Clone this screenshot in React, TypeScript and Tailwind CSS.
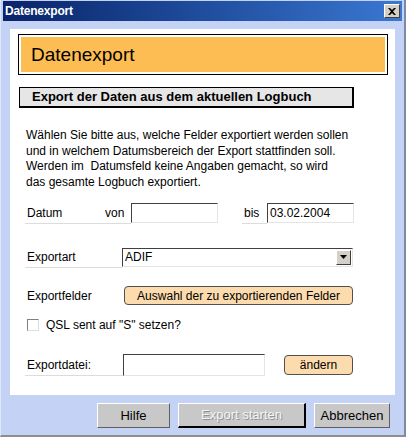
import React from "react"

const sunken =
  "bg-white border-t border-l border-t-[#404040] border-l-[#404040] border-r border-b border-r-[#e4e4e4] border-b-[#e4e4e4]"

const Label = (props: { text: string; w: string; cls?: string }) => (
  <div
    className={`${props.w} h-[22px] flex items-center pl-[2px] border-b border-[#dcdcdc] ${props.cls ?? ""}`}
  >
    {props.text}
  </div>
)

const WinButton = (props: {
  text: string
  w: string
  disabled?: boolean
  isDefault?: boolean
}) => (
  <div
    className={`${props.w} h-[25px] flex items-center justify-center bg-[#c8c8c8] text-[13px] border-t border-l border-white ${
      props.isDefault
        ? "border-r-2 border-b-2 border-r-black border-b-black"
        : "border-r border-b border-r-[#606060] border-b-[#606060]"
    } ${props.disabled ? "text-[#f4f4f4] [text-shadow:1px_1px_0_#909090]" : "text-black"}`}
  >
    {props.text}
  </div>
)

export default function App() {
  return (
    <div
      className="w-[406px] h-[437px] bg-[#c4d3f5] flex flex-col border-r-2 border-b-2 border-r-[#7c8aa8] border-b-[#8e8e8e] border-l border-l-[#dfe6f7]"
      style={{ fontFamily: '"Liberation Sans", Arial, sans-serif' }}
    >
      <div className="h-[20px] mx-[2px] mt-[1px] flex items-center justify-between bg-gradient-to-r from-[#0a246a] to-[#3a78d2] pl-[2px] pr-[2px]">
        <span className="text-white font-bold text-[12px] tracking-[-0.2px]">Datenexport</span>
        <div className="w-[16px] h-[14px] bg-[#d4d0c8] border-t border-l border-white border-r border-b border-r-[#404040] border-b-[#404040] flex items-center justify-center">
          <svg width="8" height="7" viewBox="0 0 8 7">
            <path d="M0 0 L2 0 L4 2 L6 0 L8 0 L5 3.5 L8 7 L6 7 L4 5 L2 7 L0 7 L3 3.5 Z" fill="#000" />
          </svg>
        </div>
      </div>

      <div className="ml-[9px] mr-[9px] mt-[8px] h-[366px] bg-white flex flex-col text-[12px] text-black">
        <div className="mt-[5px] ml-[8px] w-[370px] h-[41px] border border-black p-[2px]">
          <div className="h-full bg-[#fdbd52] flex items-center pl-[10px] text-[19px] leading-none">
            Datenexport
          </div>
        </div>

        <div className="mt-[12px] ml-[9px] w-[335px] h-[21px] bg-[#e6e6e6] border border-black border-r-2 border-b-2 flex items-center pl-[12px] font-bold text-[13px]">
          Export der Daten aus dem aktuellen Logbuch
        </div>

        <p className="mt-[20px] ml-[16px] leading-[15.6px] text-[12px]">
          Wählen Sie bitte aus, welche Felder exportiert werden sollen
          <br />
          und in welchem Datumsbereich der Export stattfinden soll.
          <br />
          Werden im&nbsp; Datumsfeld keine Angaben gemacht, so wird
          <br />
          das gesamte Logbuch exportiert.
        </p>

        <div className="mt-[12px] ml-[15px] flex items-center">
          <Label text="Datum" w="w-[78px]" />
          <Label text="von" w="w-[28px]" />
          <div className={`w-[87px] h-[20px] ${sunken}`} />
          <div className="w-[24px]" />
          <Label text="bis" w="w-[25px]" />
          <div className={`w-[87px] h-[20px] ${sunken} flex items-center pl-[2px]`}>03.02.2004</div>
        </div>

        <div className="mt-[22px] ml-[15px] flex items-center">
          <Label text="Exportart" w="w-[97px]" />
          <div className={`w-[231px] h-[19px] ${sunken} flex items-center justify-between pl-[2px]`}>
            <span>ADIF</span>
            <div className="w-[15px] h-[15px] mr-[1px] bg-[#d4d0c8] border-t border-l border-white border-r border-b border-r-[#404040] border-b-[#404040] flex items-center justify-center">
              <svg width="7" height="4" viewBox="0 0 7 4">
                <path d="M0 0 L7 0 L3.5 4 Z" fill="#000" />
              </svg>
            </div>
          </div>
        </div>

        <div className="mt-[18px] ml-[15px] flex items-center">
          <div className="w-[99px] pl-[2px]">Exportfelder</div>
          <div className="w-[229px] h-[19px] bg-[#fcdcae] border border-[#505050] rounded-[4px] flex items-center justify-center text-[12px]">
            Auswahl der zu exportierenden Felder
          </div>
        </div>

        <div className="mt-[11px] ml-[17px] flex items-center">
          <div className="w-[12px] h-[12px] bg-white border-t border-l border-t-[#808080] border-l-[#808080] border-r border-b border-r-[#dcdcdc] border-b-[#dcdcdc]" />
          <span className="ml-[7px]">QSL sent auf "S" setzen?</span>
        </div>

        <div className="mt-[20px] ml-[15px] flex items-center">
          <div className="w-[98px] h-[22px] flex items-center pl-[2px] border-b border-[#dcdcdc]">
            Exportdatei:
          </div>
          <div className={`w-[142px] h-[22px] ${sunken}`} />
          <div className="w-[19px]" />
          <div className="w-[69px] h-[20px] bg-[#fcdcae] border border-[#505050] rounded-[4px] flex items-center justify-center">
            ändern
          </div>
        </div>
      </div>

      <div className="mt-[8px] flex justify-end gap-[8px] pr-[14px]">
        <WinButton text="Hilfe" w="w-[73px]" />
        <WinButton text="Export starten" w="w-[128px]" disabled isDefault />
        <WinButton text="Abbrechen" w="w-[76px]" />
      </div>
    </div>
  )
}
